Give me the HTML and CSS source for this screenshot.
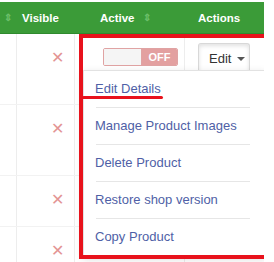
FILE: index.html
```html
<!DOCTYPE html>
<html lang="en">
<head>
    <meta charset="UTF-8">
    <title>Products</title>
    <link rel="stylesheet" href="styles.css">
</head>
<body>
    <div class="table">
        <div class="head">
            <div class="th col-a"><span class="sort">&#8661;</span></div>
            <div class="th col-b">Visible</div>
            <div class="th col-c">Active <span class="sort">&#8661;</span></div>
            <div class="th col-d">Actions</div>
        </div>
        <div class="row">
            <div class="td col-a"></div>
            <div class="td col-b"><span class="cross">&#10005;</span></div>
            <div class="td col-c">
                <div class="toggle"><span class="knob"></span><span class="off">OFF</span></div>
            </div>
            <div class="td col-d">
                <button class="edit-btn">Edit <span class="caret"></span></button>
            </div>
        </div>
        <div class="row">
            <div class="td col-a"></div>
            <div class="td col-b"><span class="cross">&#10005;</span></div>
            <div class="td col-c"></div>
            <div class="td col-d"></div>
        </div>
        <div class="row short">
            <div class="td col-a"></div>
            <div class="td col-b"><span class="cross">&#10005;</span></div>
            <div class="td col-c"></div>
            <div class="td col-d"></div>
        </div>
        <div class="row">
            <div class="td col-a"></div>
            <div class="td col-b"><span class="cross">&#10005;</span></div>
            <div class="td col-c"></div>
            <div class="td col-d"></div>
        </div>

        <ul class="menu">
            <li><a href="#">Edit Details</a></li>
            <li><a href="#">Manage Product Images</a></li>
            <li><a href="#">Delete Product</a></li>
            <li><a href="#">Restore shop version</a></li>
            <li><a href="#">Copy Product</a></li>
        </ul>

        <div class="mark-box"></div>
        <div class="mark-line"></div>
    </div>
</body>
</html>
```

FILE: styles.css
```css
body {
    margin: 0;
    padding: 0;
    font-family: "Liberation Sans", Arial, sans-serif;
    background-color: #fff;
    overflow: hidden;
}
.table {
    position: relative;
    width: 264px;
    height: 262px;
    overflow: hidden;
}
.head {
    display: flex;
    height: 31px;
    margin-top: 2px;
    background-color: #3b9b38;
    border-bottom: 1px solid #2f8a2e;
    color: #fff;
    font-weight: bold;
    font-size: 11.5px;
}
.th {
    display: flex;
    align-items: center;
}
.sort {
    color: #6cbf69;
    font-size: 10px;
    margin-left: 8px;
}
.head .col-a .sort {
    margin-left: 4px;
}
.head .col-b {
    padding-left: 5px;
}
.head .col-c {
    padding-left: 25px;
}
.head .col-d {
    padding-left: 13px;
}
.col-a {
    width: 17px;
    box-sizing: border-box;
}
.col-b {
    width: 58px;
    box-sizing: border-box;
}
.col-c {
    width: 110px;
    box-sizing: border-box;
}
.col-d {
    flex: 1;
}
.row {
    display: flex;
    height: 70px;
    border-bottom: 1px solid #f2f2f2;
}
.row.short {
    height: 50px;
}
.td {
    border-right: 1px solid #ededed;
    padding-top: 14px;
}
.td.col-d {
    border-right: none;
}
.td.col-b {
    text-align: right;
    padding-right: 10px;
}
.cross {
    color: #e39494;
    font-size: 16px;
    line-height: 20px;
}
.toggle {
    display: flex;
    width: 75px;
    height: 18px;
    margin-left: 28px;
    border: 1px solid #e0a3a3;
    box-sizing: border-box;
    border-radius: 2px;
    overflow: hidden;
}
.knob {
    width: 37px;
    background-color: #f5f5f5;
    border-right: 1px solid #e0a3a3;
}
.off {
    flex: 1;
    background-color: #e3a0a0;
    color: #fff;
    font-size: 11px;
    font-weight: bold;
    text-align: center;
    line-height: 16px;
}
.edit-btn {
    display: flex;
    align-items: center;
    gap: 6px;
    width: 52px;
    height: 30px;
    margin-left: 13px;
    margin-top: -5px;
    padding: 0 0 0 10px;
    background-color: #fff;
    border: 1px solid #d8d8d8;
    border-bottom: none;
    border-radius: 3px 3px 0 0;
    box-shadow: inset 0 2px 4px rgba(0, 0, 0, 0.12);
    font-family: "Liberation Sans", Arial, sans-serif;
    font-size: 13px;
    color: #333;
}
.caret {
    width: 0;
    height: 0;
    border-left: 4px solid transparent;
    border-right: 4px solid transparent;
    border-top: 4px solid #555;
}
.menu {
    position: absolute;
    left: 83px;
    top: 70px;
    width: 181px;
    margin: 0;
    padding: 0;
    list-style: none;
    background-color: #fff;
    border: 1px solid #e2e2e2;
    box-shadow: 0 3px 8px rgba(0, 0, 0, 0.15);
}
.menu li {
    margin: 0 15px 0 12px;
    border-top: 1px solid #e6e6e6;
}
.menu li:first-child {
    border-top: none;
}
.menu a {
    display: block;
    height: 36px;
    line-height: 36px;
    font-size: 13px;
    color: #4f5fa6;
    text-decoration: none;
    margin-left: -1px;
}
.mark-box {
    position: absolute;
    left: 79px;
    top: 34px;
    width: 181px;
    height: 217px;
    border: 4px solid #e8121c;
}
.mark-line {
    position: absolute;
    left: 82px;
    top: 96px;
    width: 81px;
    height: 3px;
    background-color: #e8121c;
    border-radius: 2px;
}
```
